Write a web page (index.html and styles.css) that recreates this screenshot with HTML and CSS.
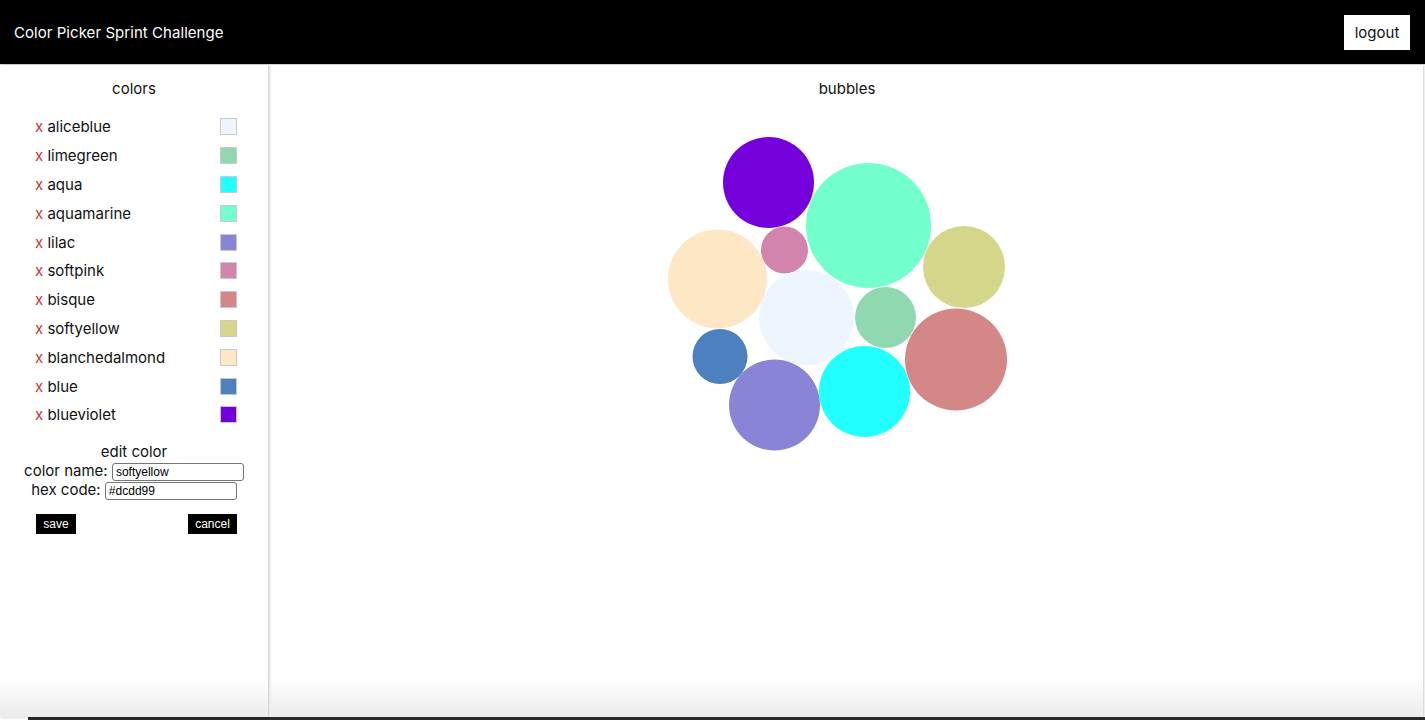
FILE: index.html
```html
<!DOCTYPE html>
<html lang="en">
<head>
<meta charset="utf-8">
<title>Color Picker Sprint Challenge</title>
<link rel="stylesheet" href="styles.css">
</head>
<body>
<header class="topbar">
  <h1 class="brand">Color Picker Sprint Challenge</h1>
  <button class="logout">logout</button>
</header>
<div class="workspace">
  <aside class="sidebar">
    <p class="panel-title">colors</p>
    <ul class="color-list">
      <li class="color-row"><span class="name"><span class="del">x</span> aliceblue</span><span class="swatch sw-aliceblue"></span></li>
      <li class="color-row"><span class="name"><span class="del">x</span> limegreen</span><span class="swatch sw-limegreen"></span></li>
      <li class="color-row"><span class="name"><span class="del">x</span> aqua</span><span class="swatch sw-aqua"></span></li>
      <li class="color-row"><span class="name"><span class="del">x</span> aquamarine</span><span class="swatch sw-aquamarine"></span></li>
      <li class="color-row"><span class="name"><span class="del">x</span> lilac</span><span class="swatch sw-lilac"></span></li>
      <li class="color-row"><span class="name"><span class="del">x</span> softpink</span><span class="swatch sw-softpink"></span></li>
      <li class="color-row"><span class="name"><span class="del">x</span> bisque</span><span class="swatch sw-bisque"></span></li>
      <li class="color-row"><span class="name"><span class="del">x</span> softyellow</span><span class="swatch sw-softyellow"></span></li>
      <li class="color-row"><span class="name"><span class="del">x</span> blanchedalmond</span><span class="swatch sw-blanchedalmond"></span></li>
      <li class="color-row"><span class="name"><span class="del">x</span> blue</span><span class="swatch sw-blue"></span></li>
      <li class="color-row"><span class="name"><span class="del">x</span> blueviolet</span><span class="swatch sw-blueviolet"></span></li>
    </ul>
    <form class="edit-form">
      <p class="edit-title">edit color</p>
      <label class="field">color name: <input class="text-input" type="text" value="softyellow"></label>
      <label class="field">hex code: <input class="text-input" type="text" value="#dcdd99"></label>
      <div class="button-row">
        <button type="button" class="btn btn-save">save</button>
        <button type="button" class="btn btn-cancel">cancel</button>
      </div>
    </form>
  </aside>
  <main class="bubbles">
    <p class="panel-title">bubbles</p>
    <svg class="bubble-svg" width="400" height="400" viewBox="0 0 400 400">
      <circle cx="121.5" cy="72.5" r="45.5" fill="#7400db"/>
      <circle cx="221.5" cy="115.5" r="62.5" fill="#73ffcb"/>
      <circle cx="137.5" cy="140" r="23.5" fill="#d384ad"/>
      <circle cx="70.5" cy="169" r="49.5" fill="#fee7c5"/>
      <circle cx="317" cy="157" r="41" fill="#d4d78a"/>
      <circle cx="159.5" cy="207.5" r="47.5" fill="#edf6ff"/>
      <circle cx="238.5" cy="207.5" r="30.5" fill="#8fd8b0"/>
      <circle cx="309" cy="249.5" r="51" fill="#d48787"/>
      <circle cx="73" cy="246.5" r="27.5" fill="#4d80bf"/>
      <circle cx="127.5" cy="295" r="45.5" fill="#8985d6"/>
      <circle cx="217.5" cy="281.5" r="45.5" fill="#22ffff"/>
    </svg>
  </main>
</div>
<div class="dock-strip"></div>
</body>
</html>
```

FILE: styles.css
```css
html, body {
  margin: 0;
  padding: 0;
}
body {
  width: 1425px;
  height: 720px;
  overflow: hidden;
  display: flex;
  flex-direction: column;
  font-family: "Inter", "Noto Sans", sans-serif;
  color: #111;
  background: #fff;
}
.topbar {
  height: 65px;
  flex: 0 0 65px;
  background: #000;
  display: flex;
  align-items: center;
  justify-content: space-between;
  padding: 0 15px 0 14px;
  box-sizing: border-box;
  border-bottom: 1px solid #ddd;
}
.brand {
  margin: 0;
  font-size: 15px;
  font-weight: 400;
  color: #fff;
  letter-spacing: 0.05px;
}
.logout {
  width: 66px;
  height: 35px;
  background: #fff;
  border: none;
  font-family: inherit;
  font-size: 15px;
  color: #111;
  padding: 0;
  margin-top: 1px;
}
.workspace {
  flex: 1;
  display: flex;
  min-height: 0;
}
.sidebar {
  width: 268px;
  flex: 0 0 268px;
  box-shadow: 1px 0 3px rgba(0,0,0,0.25);
  background: linear-gradient(to bottom, #fff calc(100% - 40px), #ebebeb);
  position: relative;
  z-index: 1;
}
.bubbles {
  flex: 1;
  margin-left: 3px;
  margin-right: 2px;
  box-shadow: 1px 0 2px rgba(0,0,0,0.2);
  background: linear-gradient(to bottom, #fff calc(100% - 40px), #ebebeb);
}
.panel-title {
  margin: 14px 0 0;
  font-size: 15px;
  line-height: 20px;
  text-align: center;
}
.color-list {
  list-style: none;
  margin: 13.6px 0 0;
  padding: 0 31px 0 35px;
}
.color-row {
  height: 28.8px;
  display: flex;
  align-items: center;
  justify-content: space-between;
  font-size: 15px;
}
.del {
  color: #c8343a;
}
.swatch {
  width: 15px;
  height: 15px;
  border: 1px solid #c9c9c9;
}
.sw-aliceblue { background: #edf6ff; }
.sw-limegreen { background: #8fd8b0; }
.sw-aqua { background: #22ffff; }
.sw-aquamarine { background: #73ffcb; }
.sw-lilac { background: #8985d6; }
.sw-softpink { background: #d384ad; }
.sw-bisque { background: #d48787; }
.sw-softyellow { background: #d4d78a; }
.sw-blanchedalmond { background: #fee7c5; }
.sw-blue { background: #4d80bf; }
.sw-blueviolet { background: #7400db; }
.edit-form {
  margin: 13.6px 0 0;
  text-align: center;
  font-size: 15px;
}
.edit-title {
  margin: 0;
  line-height: 18px;
}
.field {
  display: block;
  height: 19.5px;
  line-height: 19.5px;
}
.text-input {
  box-sizing: border-box;
  width: 132px;
  height: 18px;
  border: 1px solid #767676;
  border-radius: 3px;
  padding: 1px 3px;
  font-family: "Liberation Sans", Arial, sans-serif;
  font-size: 12px;
  color: #000;
  vertical-align: middle;
  margin: 0;
}
.button-row {
  display: flex;
  justify-content: space-between;
  padding: 0 31px 0 36px;
  margin-top: 14px;
}
.btn {
  height: 20px;
  background: #000;
  color: #fff;
  border: none;
  font-family: "Liberation Sans", Arial, sans-serif;
  font-size: 12px;
  padding: 0;
}
.btn-save { width: 40px; }
.btn-cancel { width: 49px; }
.bubble-svg {
  display: block;
  margin: 11px auto 0;
}
.dock-strip {
  height: 3px;
  flex: 0 0 3px;
  background: #2a2a2a;
  margin-left: 28px;
}
```
